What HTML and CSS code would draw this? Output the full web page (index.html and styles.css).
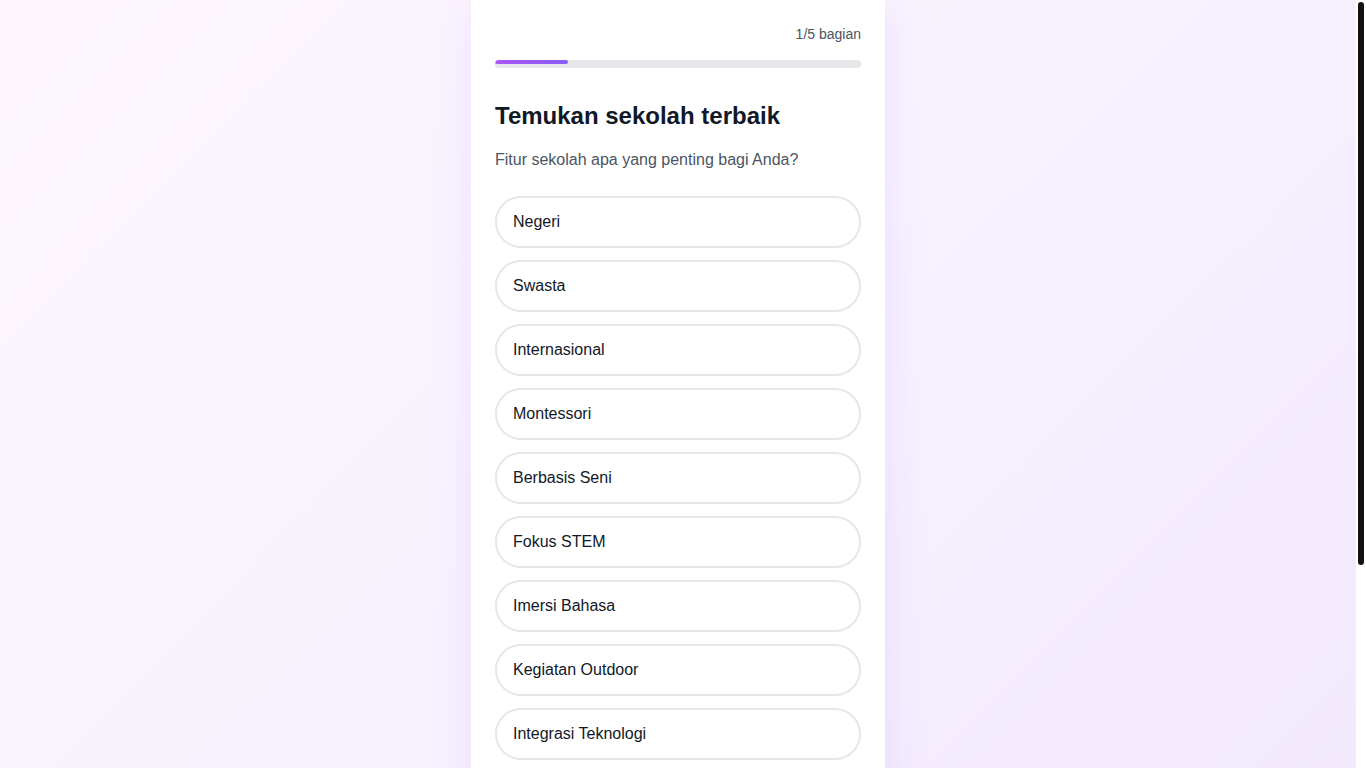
FILE: index.html
```html
<!DOCTYPE html>
<html lang="id">
<head>
<meta charset="utf-8">
<title>Temukan sekolah terbaik</title>
<link rel="stylesheet" href="styles.css">
</head>
<body>
<main class="page">
  <section class="card">
    <div class="progress-label">1/5 bagian</div>
    <div class="progress-track"><div class="progress-fill" style="width:20%"></div></div>
    <h1 class="title">Temukan sekolah terbaik</h1>
    <p class="subtitle">Fitur sekolah apa yang penting bagi Anda?</p>
    <div class="options">
      <button class="option">Negeri</button>
      <button class="option">Swasta</button>
      <button class="option">Internasional</button>
      <button class="option">Montessori</button>
      <button class="option">Berbasis Seni</button>
      <button class="option">Fokus STEM</button>
      <button class="option">Imersi Bahasa</button>
      <button class="option">Kegiatan Outdoor</button>
      <button class="option">Integrasi Teknologi</button>
      <button class="option">Pendidikan Agama</button>
      <button class="option">Program Olahraga</button>
      <button class="option">Asrama</button>
    </div>
    <button class="next">Lanjut</button>
  </section>
</main>
<div class="scrollbar" aria-hidden="true"><div class="scroll-thumb"></div></div>
</body>
</html>
```

FILE: styles.css
```css
html {
  background: #ffffff;
}
::-webkit-scrollbar {
  width: 0;
  height: 0;
}
body {
  margin: 0 10px 0 0;
  font-family: "Liberation Sans", Arial, sans-serif;
  color: #111827;
  background: linear-gradient(135deg, #fdf6fe 0%, #f8f2fe 50%, #f2e9fd 100%);
  background-attachment: fixed;
  min-height: 100vh;
}
.scrollbar {
  position: fixed;
  top: 0;
  right: 0;
  bottom: 0;
  width: 10px;
  background: #ffffff;
}
.scroll-thumb {
  margin: 2px 0 0 2px;
  width: 6px;
  height: 563px;
  border-radius: 3px;
  background: #111111;
}
.page {
  display: flex;
  justify-content: center;
}
.card {
  width: 414px;
  box-sizing: border-box;
  padding: 24px;
  background: #ffffff;
  box-shadow: 0 8px 40px rgba(139, 92, 246, 0.12);
  display: flex;
  flex-direction: column;
}
.progress-label {
  text-align: right;
  font-size: 14px;
  line-height: 20px;
  color: #4b5563;
}
.progress-track {
  margin-top: 16px;
  height: 8px;
  border-radius: 4px;
  background: #e5e7eb;
  overflow: hidden;
}
.progress-fill {
  height: 4px;
  border-radius: 2px;
  background: linear-gradient(90deg, #a855f7, #8b5cf6);
}
.title {
  margin: 32px 0 0;
  font-size: 24px;
  line-height: 32px;
  font-weight: 700;
  color: #111827;
}
.subtitle {
  margin: 16px 0 0;
  font-size: 16px;
  line-height: 24px;
  color: #4b5563;
}
.options {
  margin-top: 24px;
  display: flex;
  flex-direction: column;
  gap: 12px;
}
.option {
  display: block;
  width: 100%;
  box-sizing: border-box;
  height: 52px;
  padding: 0 16px;
  border: 2px solid #e5e7eb;
  border-radius: 9999px;
  background: #ffffff;
  font-family: inherit;
  font-size: 16px;
  line-height: 20px;
  color: #111827;
  text-align: left;
  cursor: pointer;
}
.next {
  margin-top: 24px;
  height: 48px;
  border: none;
  border-radius: 9999px;
  background: linear-gradient(90deg, #a855f7, #8b5cf6);
  color: #ffffff;
  font-family: inherit;
  font-size: 16px;
  font-weight: 700;
}
```
